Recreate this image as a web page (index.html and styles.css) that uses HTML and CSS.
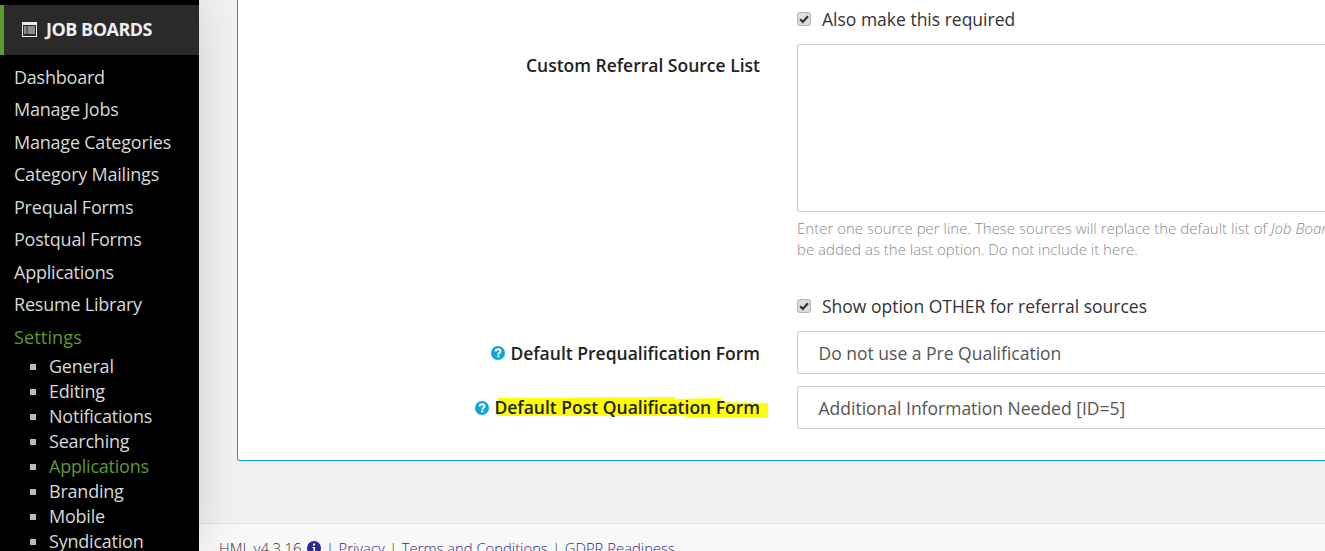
FILE: index.html
```html
<!DOCTYPE html>
<html lang="en">
<head>
<meta charset="utf-8">
<title>Job Boards Settings</title>
<link rel="stylesheet" href="styles.css">
</head>
<body>
<div class="layout">
  <aside class="sidebar">
    <div class="side-head">
      <svg class="head-icon" viewBox="0 0 15 15" width="15" height="15"><path fill="#eee" fill-rule="evenodd" d="M0 0h15v15H0zM1 3v11h13V3zM2 4.500h2.500v1H2zM5.500 4.500H13v1H5.500zM2 6.500h2.500v1H2zM5.500 6.500H13v1H5.500zM2 8.500h2.500v1H2zM5.500 8.500H13v1H5.500zM2 10.500h2.500v1H2zM5.500 10.500H13v1H5.500z"/></svg>
      <span>JOB BOARDS</span>
    </div>
    <nav class="nav">
      <a class="nav-item">Dashboard</a>
      <a class="nav-item">Manage Jobs</a>
      <a class="nav-item">Manage Categories</a>
      <a class="nav-item">Category Mailings</a>
      <a class="nav-item">Prequal Forms</a>
      <a class="nav-item">Postqual Forms</a>
      <a class="nav-item">Applications</a>
      <a class="nav-item">Resume Library</a>
      <a class="nav-item is-active">Settings</a>
      <ul class="subnav">
        <li>General</li>
        <li>Editing</li>
        <li>Notifications</li>
        <li>Searching</li>
        <li class="is-active">Applications</li>
        <li>Branding</li>
        <li>Mobile</li>
        <li>Syndication</li>
      </ul>
    </nav>
  </aside>
  <main class="main">
    <section class="panel">
      <div class="row row-check-top">
        <div class="label"></div>
        <label class="check"><span class="box"><svg viewBox="0 0 14 14" width="14" height="14"><path d="M3.200 7.300l2.600 2.600L11 4.200" fill="none" stroke="#333" stroke-width="2.200"/></svg></span>Also make this required</label>
      </div>
      <div class="row row-source">
        <div class="label label-source">Custom Referral Source List</div>
        <div class="field">
          <div class="textarea"></div>
          <p class="help">Enter one source per line. These sources will replace the default list of <em>Job Boards, Search Engines, Social Media, Friend or Colleague, etc.</em> The option OTHER will<br>be added as the last option. Do not include it here.</p>
        </div>
      </div>
      <div class="row row-check-other">
        <div class="label"></div>
        <label class="check"><span class="box"><svg viewBox="0 0 14 14" width="14" height="14"><path d="M3.200 7.300l2.600 2.600L11 4.200" fill="none" stroke="#333" stroke-width="2.200"/></svg></span>Show option OTHER for referral sources</label>
      </div>
      <div class="row row-select">
        <div class="label">
          <svg class="help-icon" viewBox="0 0 14 14" width="14" height="14"><circle cx="7" cy="7" r="7" fill="#0ea5dc"/><path d="M4.600 5.500C4.700 4 5.800 3.200 7.100 3.200c1.400 0 2.400.8 2.400 2 0 1.700-2.200 1.600-2.200 3.200" fill="none" stroke="#fff" stroke-width="1.900"/><rect x="6.300" y="9.400" width="2" height="1.900" fill="#fff"/></svg>
          <span>Default Prequalification Form</span>
        </div>
        <div class="select">Do not use a Pre Qualification</div>
      </div>
      <div class="row row-select">
        <div class="label">
          <svg class="help-icon" viewBox="0 0 14 14" width="14" height="14"><circle cx="7" cy="7" r="7" fill="#0ea5dc"/><path d="M4.600 5.500C4.700 4 5.800 3.200 7.100 3.200c1.400 0 2.400.8 2.400 2 0 1.700-2.200 1.600-2.200 3.200" fill="none" stroke="#fff" stroke-width="1.900"/><rect x="6.300" y="9.400" width="2" height="1.900" fill="#fff"/></svg>
          <span class="marked"><svg class="marker" viewBox="0 0 272 21" width="272" height="21"><path fill="#ffff00" d="M0 1L177 0L178 2L224 1L225 5L271 6L271 21L190 21L189 19L0 19z"/></svg>Default Post Qualification Form</span>
        </div>
        <div class="select">Additional Information Needed [ID=5]</div>
      </div>
    </section>
    <footer class="footer">
      <span>HML v4.3.16</span>
      <svg class="info-icon" viewBox="0 0 14 14" width="14" height="14"><circle cx="7" cy="7" r="7" fill="#2c2a8c"/><rect x="6" y="2.500" width="2" height="2" fill="#fff"/><path d="M5.500 6h2.500v4.500h1v1H5.500v-1h1V7h-1z" fill="#fff"/></svg>
      <span class="sep">|</span><a>Privacy</a><span class="sep">|</span><a>Terms and Conditions</a><span class="sep">|</span><a>GDPR Readiness</a>
    </footer>
  </main>
</div>
</body>
</html>
```

FILE: styles.css
```css
html, body {
  margin: 0;
  height: 100%;
  overflow: hidden;
  background: #f1f1f1;
  font-family: "Open Sans", sans-serif;
  color: #333;
}

.layout {
  display: flex;
  height: 551px;
  overflow: hidden;
}

.sidebar {
  flex: 0 0 199px;
  background: #000;
  padding-top: 5px;
  box-shadow: 0 0 40px rgba(0, 0, 0, 0.14);
  position: relative;
  overflow: hidden;
  box-sizing: border-box;
}

.side-head {
  height: 50px;
  box-sizing: border-box;
  background: #2a2a2a;
  border-left: 4px solid #5c9a32;
  display: flex;
  align-items: center;
  gap: 9px;
  padding: 0 0 2px 18px;
  color: #eee;
  font-size: 18px;
  font-weight: 700;
  letter-spacing: -0.5px;
}

.head-icon { flex: none; margin-top: 1px; }

.nav {
  display: flex;
  flex-direction: column;
  padding: 5.8px 0 0 14px;
  color: #d8d8d8;
  font-size: 18px;
}

.nav-item {
  height: 32.5px;
  line-height: 32px;
  letter-spacing: -0.22px;
}

.is-active { color: #5c9a32; }

.nav-item.is-active { letter-spacing: 0.15px; }

.subnav {
  margin: 0.7px 0 0;
  padding: 0 0 0 35px;
  list-style: none;
}

.subnav li {
  position: relative;
  height: 25px;
  line-height: 25px;
  letter-spacing: -0.22px;
}

.subnav li::before {
  content: "";
  position: absolute;
  left: -19px;
  top: 10px;
  width: 6px;
  height: 6px;
  background: #bbb;
}

.main {
  flex: 1;
  min-width: 0;
  display: flex;
  flex-direction: column;
  overflow: hidden;
}

.panel {
  width: 1200px;
  height: 461px;
  flex: none;
  box-sizing: border-box;
  margin-left: 38px;
  background: #fff;
  border-left: 1px solid #0ea5dc;
  border-bottom: 1px solid #0ea5dc;
  border-radius: 0 0 0 3px;
  display: flex;
  flex-direction: column;
}

.row {
  display: grid;
  grid-template-columns: 522px 1fr;
  column-gap: 37px;
}

.label {
  display: flex;
  justify-content: flex-end;
  align-items: center;
  gap: 5px;
  font-size: 17.5px;
  font-weight: 600;
  color: #222;
  white-space: nowrap;
}

.label-source { align-items: flex-start; padding-top: 9px; line-height: 24px; }

.row-check-top { height: 44px; padding-top: 7px; box-sizing: border-box; }
.row-source { height: 249px; }
.row-check-other { height: 38px; padding-top: 1px; box-sizing: border-box; }
.row-select { height: 43px; margin-bottom: 12px; }

.check {
  display: flex;
  align-items: center;
  gap: 11px;
  height: 24px;
  font-size: 17.5px;
  color: #333;
  white-space: nowrap;
}

.box {
  width: 14px;
  height: 14px;
  box-sizing: border-box;
  flex: none;
  background: #dcdcdc;
  border: 1px solid #b4b4b4;
  border-radius: 3px;
  display: block;
  position: relative;
}

.box svg { position: absolute; left: -1px; top: -1px; }

.textarea {
  height: 168px;
  box-sizing: border-box;
  border: 1px solid #ccc;
  border-radius: 3px 0 0 3px;
  background: #fff;
}

.help {
  margin: 6px 0 0;
  color: #8a8a8a;
  font-size: 15px;
  font-weight: 300;
  line-height: 21px;
  white-space: nowrap;
}

.select {
  height: 43px;
  box-sizing: border-box;
  border: 1px solid #ccc;
  border-radius: 3px 0 0 3px;
  padding-left: 20.5px;
  display: flex;
  align-items: center;
  font-size: 17.5px;
  color: #555;
  white-space: nowrap;
}

.help-icon { flex: none; }

.marked {
  position: relative;
  isolation: isolate;
  line-height: 23px;
}

.marker {
  position: absolute;
  left: 3px;
  top: 1px;
  z-index: -1;
}

.footer {
  margin-top: 62px;
  flex: none;
  height: 60px;
  box-sizing: border-box;
  border-top: 1px solid #ddd;
  background: #f8f8f8;
  padding: 14px 0 0 20px;
  display: flex;
  align-items: flex-start;
  font-size: 14.8px;
  font-weight: 300;
  line-height: 20px;
  color: #333;
  white-space: nowrap;
}

.footer a { color: #2c2a8c; }
.info-icon { margin: 3px 0 0 6px; }
.sep { margin: 0 4.5px; }
```
